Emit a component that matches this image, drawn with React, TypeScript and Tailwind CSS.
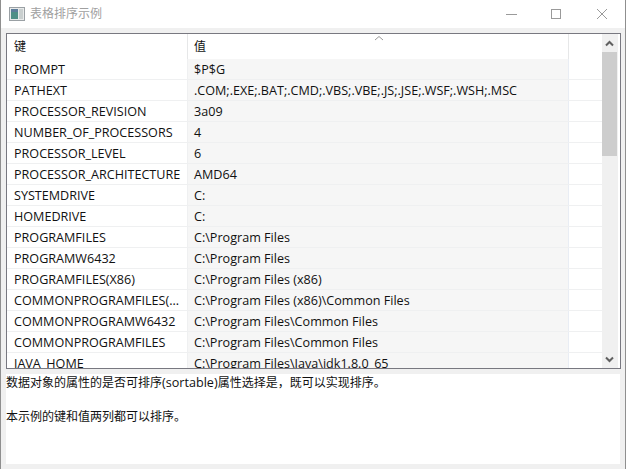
const rows: [string, string][] = [
  ["PROMPT", "$P$G"],
  ["PATHEXT", ".COM;.EXE;.BAT;.CMD;.VBS;.VBE;.JS;.JSE;.WSF;.WSH;.MSC"],
  ["PROCESSOR_REVISION", "3a09"],
  ["NUMBER_OF_PROCESSORS", "4"],
  ["PROCESSOR_LEVEL", "6"],
  ["PROCESSOR_ARCHITECTURE", "AMD64"],
  ["SYSTEMDRIVE", "C:"],
  ["HOMEDRIVE", "C:"],
  ["PROGRAMFILES", "C:\\Program Files"],
  ["PROGRAMW6432", "C:\\Program Files"],
  ["PROGRAMFILES(X86)", "C:\\Program Files (x86)"],
  ["COMMONPROGRAMFILES(...", "C:\\Program Files (x86)\\Common Files"],
  ["COMMONPROGRAMW6432", "C:\\Program Files\\Common Files"],
  ["COMMONPROGRAMFILES", "C:\\Program Files\\Common Files"],
  ["JAVA_HOME", "C:\\Program Files\\Java\\jdk1.8.0_65"],
];

const font = { fontFamily: '"Open Sans","Noto Sans CJK SC",sans-serif' };

export default function App() {
  return (
    <div className="w-[627px] h-[469px] bg-white flex overflow-hidden text-[12px] text-[#111]" style={font}>
      <div className="w-[626px] h-full flex flex-col border-l border-r border-[#8f8f8f]">
        <div className="h-[28px] shrink-0 bg-white flex items-center">
          <svg width="16" height="14" viewBox="0 0 16 14" className="ml-[8px]">
            <rect x="0.5" y="0.5" width="15" height="13" fill="#e8eaea" stroke="#9aa0a4" />
            <rect x="2" y="2" width="7" height="10" fill="#4f8f86" />
            <rect x="2" y="2" width="7" height="3" fill="#5d7d9a" />
            <rect x="10" y="2" width="4" height="10" fill="#c9cfcf" />
          </svg>
          <span className="ml-[5px] text-[12px] text-[#a0a0a0]">表格排序示例</span>
          <div className="ml-auto flex items-center">
            <svg width="12" height="12" viewBox="0 0 12 12" className="mr-[32px]"><path d="M0 6.5H11" stroke="#9a9a9a" /></svg>
            <svg width="12" height="12" viewBox="0 0 12 12" className="mr-[34px]"><rect x="1.5" y="1.5" width="9" height="9" fill="none" stroke="#9a9a9a" /></svg>
            <svg width="12" height="12" viewBox="0 0 12 12" className="mr-[17px]"><path d="M1 1L11 11M11 1L1 11" stroke="#9a9a9a" /></svg>
          </div>
        </div>
        <div className="flex-1 bg-[#f0f0f0] pl-[5px] pr-[4px] pt-[5px] pb-[5px] flex flex-col min-h-0">
          <div className="h-[336px] w-[615px] shrink-0 border border-[#787880] bg-white flex overflow-hidden">
            <div className="flex-1 min-w-0 flex flex-col relative">
              <div className="h-[25px] shrink-0 flex">
                <div className="w-[181px] shrink-0 border-r border-[#e6e7e8] pl-[7px] pt-[4px] text-[12px]">键</div>
                <div className="w-[381px] shrink-0 border-r border-[#e6e7e8] pl-[6px] pt-[4px] text-[12px]">值</div>
              </div>
              <svg width="10" height="6" viewBox="0 0 10 6" className="absolute left-[367px] top-[1px]">
                <path d="M1 5L5 1.5L9 5" fill="none" stroke="#9a9a9a" />
              </svg>
              {rows.map(([k, v]) => (
                <div key={k} className="h-[21px] shrink-0 flex border-b border-[#eff0f1] text-[12.6px]">
                  <div className="w-[181px] shrink-0 border-r border-[#eff0f1] pl-[7px] leading-[22px] whitespace-nowrap overflow-hidden">{k}</div>
                  <div className="w-[381px] shrink-0 bg-[#f6f6f6] border-r border-[#e9edf4] pl-[6px] leading-[22px] whitespace-nowrap overflow-hidden">{v}</div>
                </div>
              ))}
            </div>
            <div className="w-[16px] mr-[2px] shrink-0 bg-[#f0f0f0] flex flex-col">
              <div className="h-[18px] mr-[1px] shrink-0 flex items-center justify-center">
                <svg width="9" height="7" viewBox="0 0 9 7"><path d="M1 5.5L4.5 2L8 5.5" fill="none" stroke="#606060" strokeWidth="2" /></svg>
              </div>
              <div className="h-[104px] mr-[1px] shrink-0 bg-[#cdcdcd]" />
              <div className="flex-1" />
              <div className="h-[17px] mr-[1px] shrink-0 flex items-center justify-center">
                <svg width="9" height="7" viewBox="0 0 9 7"><path d="M1 1.5L4.5 5L8 1.5" fill="none" stroke="#606060" strokeWidth="2" /></svg>
              </div>
            </div>
          </div>
          <div className="mt-[5px] h-[90px] w-[614px] bg-white text-[12px] leading-[17px]">
            <div>数据对象的属性的是否可排序<span className="text-[12.6px]">(sortable)</span>属性选择是，既可以实现排序。</div>
            <div className="h-[17px]" />
            <div>本示例的键和值两列都可以排序。</div>
          </div>
        </div>
      </div>
      <div className="flex-1 bg-white" />
    </div>
  );
}
